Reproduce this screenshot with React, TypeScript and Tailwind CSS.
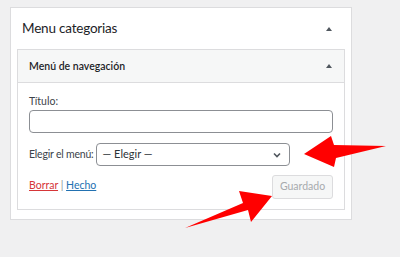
import React from "react";

const Tri = () => (
  <svg width="8" height="6" viewBox="0 0 8 6" className="block">
    <polygon points="4,1 7,5 1,5" fill="#50575e" />
  </svg>
);

export default function App() {
  return (
    <div
      className="relative w-[400px] h-[257px] overflow-hidden bg-[#f0f0f1] pt-[7px] pl-[10px]"
      style={{ fontFamily: 'Lato, "Open Sans", Arial, sans-serif' }}
    >
      <div className="w-[342px] h-[213px] border border-[#dcdcde] bg-white">
        <div className="flex h-[41px] items-center justify-between pl-[11px] pr-[18px]">
          <div className="text-[13.5px] tracking-[-0.2px] text-[#1d2327] leading-none">Menu categorias</div>
          <Tri />
        </div>
        <div className="mx-[6px] border border-[#dcdcde]">
          <div className="flex h-[33px] items-center justify-between border-b border-[#dcdcde] bg-[#f6f7f7] pl-[11px] pr-[11px]">
            <div className="text-[10.5px] font-semibold text-[#1d2327] leading-none">Menú de navegación</div>
            <Tri />
          </div>
          <div className="px-[11px] pt-[10px] pb-[10px]">
            <div className="h-[16px] text-[10.5px] leading-[16px] text-[#3c434a]">Título:</div>
            <div className="mt-[1px] h-[23px] w-full rounded-[4px] border border-[#8c8f94] bg-white" />
            <div className="mt-[10px] flex items-center gap-[2px]">
              <span className="text-[10.5px] tracking-[-0.2px] text-[#3c434a]">Elegir el menú:</span>
              <div className="flex h-[23px] w-[194px] items-center justify-between rounded-[4px] border border-[#8c8f94] bg-white pl-[6px] pr-[8px]">
                <span className="text-[11px] text-[#2c3338]">— Elegir —</span>
                <svg width="8" height="6" viewBox="0 0 8 6" className="block">
                  <polyline points="1,1.5 4,4.5 7,1.5" fill="none" stroke="#50575e" strokeWidth="1.6" />
                </svg>
              </div>
            </div>
            <div className="mt-[9px] flex items-start justify-between">
              <div className="mt-[2px] text-[10.5px] leading-[16px] text-[#3c434a]">
                <span className="text-[#d63638] underline">Borrar</span>
                <span className="text-[#8c8f94]"> | </span>
                <span className="text-[#2271b1] underline">Hecho</span>
              </div>
              <div className="flex h-[24px] w-[61px] items-center justify-center rounded-[3px] border border-[#dcdcde] bg-[#f6f7f7] text-[10.5px] text-[#a7aaad]">
                Guardado
              </div>
            </div>
          </div>
        </div>
      </div>
      <svg className="absolute left-0 top-0" width="400" height="257" viewBox="0 0 400 257">
        <polygon points="304,154 331,136 334,145 386,146 336,158 334,167" fill="#ff0000" />
        <polygon points="272,196 239,191 243,203 185,228 248,210 251,222" fill="#ff0000" />
      </svg>
    </div>
  );
}
